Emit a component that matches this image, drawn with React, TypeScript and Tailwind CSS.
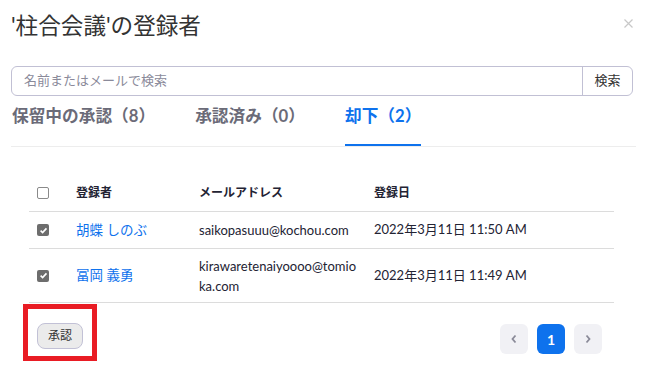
import React from "react";

const font = "font-['Lato','Noto_Sans_CJK_JP',sans-serif]";

const rows = [
  {
    name: "胡蝶 しのぶ",
    email: "saikopasuuu@kochou.com",
    date: "2022年3月11日 11:50 AM",
  },
  {
    name: "冨岡 義勇",
    email: "kirawaretenaiyoooo@tomioka.com",
    date: "2022年3月11日 11:49 AM",
  },
];

const Box = ({ checked }: { checked?: boolean }) =>
  checked ? (
    <span className="flex h-[12px] w-[12px] items-center justify-center rounded-[2px] bg-[#6d6d6d]">
      <svg width="9" height="9" viewBox="0 0 10 10">
        <path d="M1.8 5.2 4 7.3 8.3 2.6" fill="none" stroke="#fff" strokeWidth="1.8" />
      </svg>
    </span>
  ) : (
    <span className="block h-[12px] w-[12px] rounded-[2px] border border-[#8a8a8a] bg-white" />
  );

export default function App() {
  return (
    <div className={`${font} relative h-[365px] w-[647px] overflow-hidden bg-white px-[11px] text-[#232333]`}>
      {/* header */}
      <div className="flex items-start justify-between pt-[13px]">
        <h1 className="text-[22.6px] leading-[26px] font-normal text-[#333]">'柱合会議'の登録者</h1>
        <svg className="mr-[3px] mt-[6px]" width="9" height="9" viewBox="0 0 9 9">
          <path d="M0.5 0.5 8.5 8.5M8.5 0.5 0.5 8.5" stroke="#c8c8c8" strokeWidth="1.2" />
        </svg>
      </div>

      {/* search */}
      <div className="mt-[27px] flex h-[30px] w-[622px] rounded-[6px] border border-[#c1c0d4]">
        <div className="flex flex-1 items-center pl-[12px] text-[13px] text-[#8a8a9a]">名前またはメールで検索</div>
        <button className="w-[50px] border-l border-[#c1c0d4] text-[13px] text-[#333]">検索</button>
      </div>

      {/* tabs */}
      <div className="flex gap-[40px] border-b border-[#ededed] pl-[1px] text-[16.7px] font-bold text-[#6b6b78]">
        <div className="pt-[7px] pb-[16px] leading-[27px]">保留中の承認（8）</div>
        <div className="pt-[7px] pb-[16px] leading-[27px]">承認済み（0）</div>
        <div className="border-b-2 border-[#0e72ed] pt-[7px] pb-[14px] leading-[27px] text-[#0e72ed]">却下（2）</div>
      </div>

      {/* table */}
      <div className="ml-[18px] mt-[28px] w-[585px] text-[13px]">
        <div className="grid h-[37px] grid-cols-[47px_123px_175px_1fr] items-center border-b border-[#dcdcdc] text-[12px] font-bold text-[#232333]">
          <div className="pl-[8px]">
            <Box />
          </div>
          <div>登録者</div>
          <div>メールアドレス</div>
          <div>登録日</div>
        </div>
        {rows.map((r, i) => (
          <div
            key={i}
            className={`grid grid-cols-[47px_123px_175px_1fr] items-center border-b border-[#dcdcdc] ${i === 0 ? "h-[37px]" : "h-[54px]"}`}
          >
            <div className="pl-[8px]">
              <Box checked />
            </div>
            <div className="text-[13.5px] text-[#0e72ed]">{r.name}</div>
            <div className="w-[160px] break-all leading-[20px]">{r.email}</div>
            <div>{r.date}</div>
          </div>
        ))}
      </div>

      {/* footer */}
      <div className="mt-[1px] flex items-start justify-between">
        <div className="ml-[12px] h-[57px] w-[74px] border-[5px] border-[#e91c24] pl-[9px] pt-[13px]">
          <button className="h-[26px] w-[46px] rounded-[8px] border border-[#c2c1d6] bg-[#ebebeb] text-[12px] text-[#333]">
            承認
          </button>
        </div>
        <div className="mr-[34px] mt-[20px] flex gap-[9px]">
          <button className="flex h-[30px] w-[28px] items-center justify-center rounded-[6px] bg-[#f1f1f5]">
            <svg width="8" height="10" viewBox="0 0 8 10">
              <path d="M5.5 1.5 2.5 5 5.5 8.5" fill="none" stroke="#8a8a98" strokeWidth="1.8" />
            </svg>
          </button>
          <button className="h-[30px] w-[28px] rounded-[6px] bg-[#0e72ed] text-[14px] font-bold text-white">1</button>
          <button className="flex h-[30px] w-[28px] items-center justify-center rounded-[6px] bg-[#f1f1f5]">
            <svg width="8" height="10" viewBox="0 0 8 10">
              <path d="M2.5 1.5 5.5 5 2.5 8.5" fill="none" stroke="#8a8a98" strokeWidth="1.8" />
            </svg>
          </button>
        </div>
      </div>
    </div>
  );
}
